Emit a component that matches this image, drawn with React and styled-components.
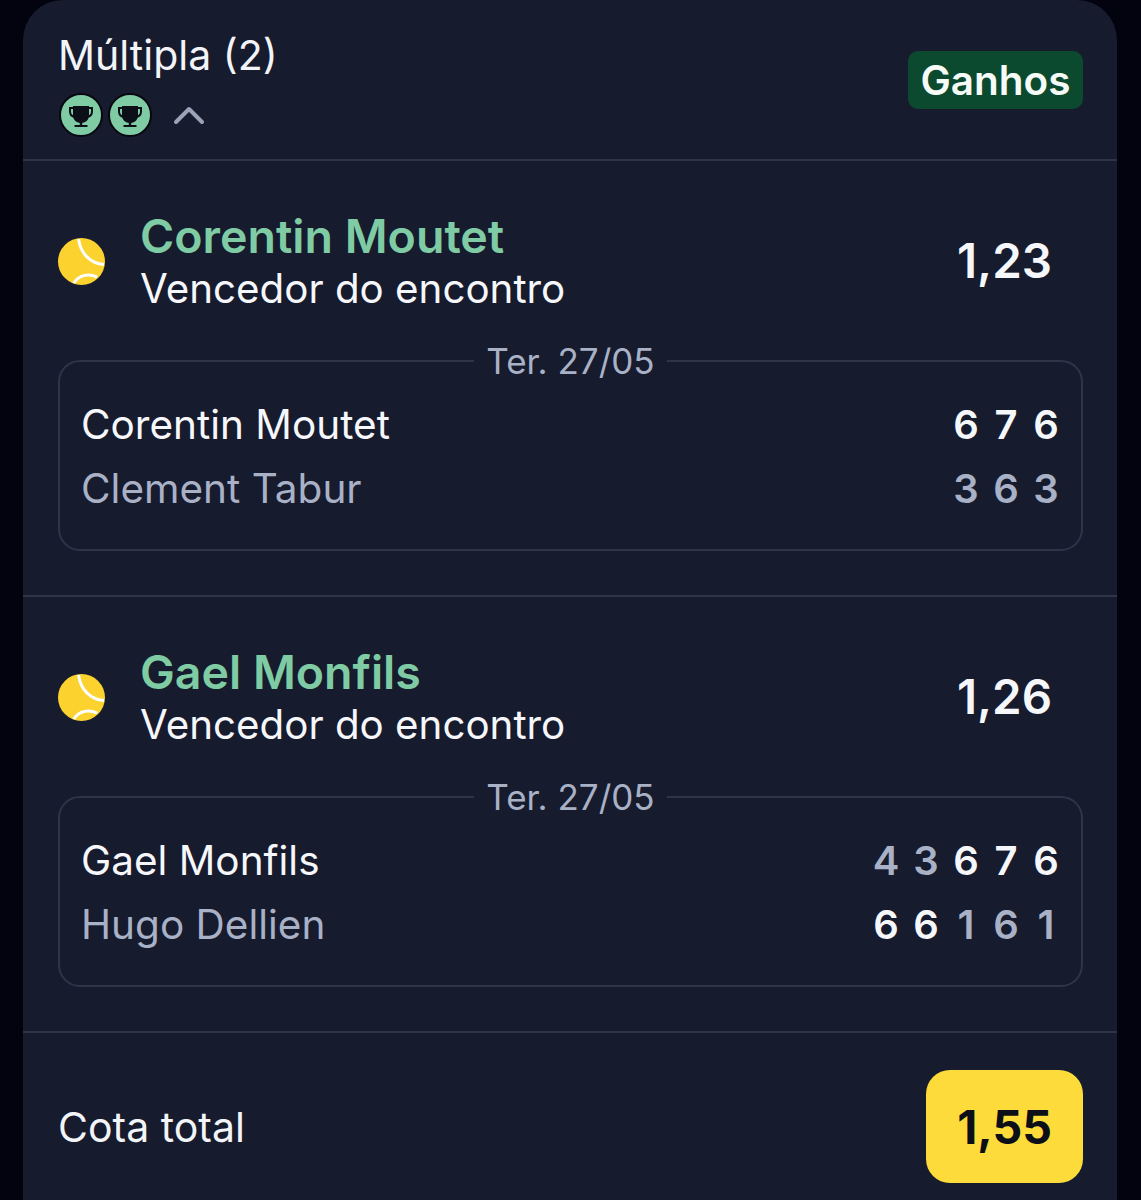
import React from "react";
import styled, { createGlobalStyle } from "styled-components";

const Global = createGlobalStyle`
  html, body { margin: 0; padding: 0; background: #03030f; }
  * { box-sizing: border-box; }
`;
const Page = styled.div`
  height: 1200px; overflow: hidden; padding: 0 24px 0 23px;
  background: #03030f;
  font-family: Inter, "Liberation Sans", sans-serif; color: #fff;
`;
const Card = styled.div`
  background: #161b2e; border-radius: 40px 40px 0 0; height: 1240px;
`;
const Header = styled.header`
  height: 161px; padding: 34px 34px 0 35px; border-bottom: 2px solid #2f3447;
  display: flex; justify-content: space-between; align-items: flex-start;
`;
const HeaderLeft = styled.div`display: flex; flex-direction: column;`;
const Title = styled.div`font-size: 41px; line-height: 42px; color: #f2f4f8;`;
const Legs = styled.div`display: flex; align-items: center; margin: 17px 0 0 1px; gap: 5px;`;
const Chevron = styled.svg`margin-left: 16px;`;
const Badge = styled.div`
  margin-top: 17px; height: 58px; width: 175px; border-radius: 10px; background: #0b4a2e;
  display: flex; align-items: center; justify-content: center;
  font-size: 40.500px; font-weight: 600; color: #f6fbf8;
`;
const Section = styled.section`
  height: 436px; padding: 47px 34px 0 35px; border-bottom: 2px solid #2f3447;
`;
const Selection = styled.div`display: flex; align-items: center; height: 108px;`;
const Ball = styled.svg`flex: none; margin: 0 35px 2px 0;`;
const SelectionText = styled.div`flex: 1;`;
const Pick = styled.div`font-size: 46.500px; line-height: 52px; font-weight: 600; color: #7fcba4;`;
const Market = styled.div`margin-top: 2px; font-size: 40.300px; line-height: 50px; color: #f6f7fa;`;
const Odds = styled.div`
  width: 157px; margin-bottom: 3px; text-align: center;
  font-size: 47.500px; font-weight: 600; color: #f6f7fa;
`;
const MatchBox = styled.fieldset`
  margin: 25px 0 0; padding: 0 15px; height: 210px;
  border: 2px solid #2f3447; border-radius: 22px;
`;
const DateLabel = styled.legend`
  margin: 0 auto; padding: 0 12px; font-size: 35px; line-height: 40px; color: #a9b1c6;
`;
const Row = styled.div`
  display: flex; justify-content: space-between; align-items: center; height: 64px;
  &:first-of-type { margin-top: 11px; }
`;
const Name = styled.div`
  margin-left: 6px; font-size: 40.500px; color: ${p => (p.$winner ? "#f6f7fa" : "#a9b1c6")};
`;
const Scores = styled.div`display: flex;`;
const Score = styled.span`
  width: 40px; text-align: center; font-size: 40px;
  font-weight: 600; color: ${p => (p.$won ? "#f6f7fa" : "#a9b1c6")};
`;
const Footer = styled.footer`
  display: flex; justify-content: space-between; align-items: center;
  padding: 37px 34px 0 35px;
`;
const TotalLabel = styled.div`font-size: 41px; color: #f2f4f8;`;
const Total = styled.div`
  width: 157px; height: 113px; border-radius: 24px; background: #fcdb3a;
  display: flex; align-items: center; justify-content: center;
  font-size: 46.500px; font-weight: 700; color: #0c0e18;
`;

const Trophy = () => (
  <svg width="44" height="44" viewBox="0 0 44 44">
    <circle cx="22" cy="22" r="21" fill="#7fcba4" stroke="#07080f" strokeWidth="2" />
    <path d="M14 13h16v9.500c0 4.500-3.500 7.500-8 7.500s-8-3-8-7.500z" fill="#0c0e18" />
    <path d="M14 15h-3v3.500c0 3 2 5 5 5.500M30 15h3v3.500c0 3-2 5-5 5.500" fill="none" stroke="#0c0e18" strokeWidth="2" />
    <path d="M22 29v3.500" stroke="#0c0e18" strokeWidth="2.500" />
    <path d="M15.500 33h13" stroke="#0c0e18" strokeWidth="2" />
  </svg>
);
const TennisBall = () => (
  <Ball width="47" height="47" viewBox="0 0 48 48">
    <circle cx="24" cy="24" r="24" fill="#fcd22f" />
    <path d="M21 1C23 16 33 26 47 27M16 46C22 37 32 36 40 40" fill="none" stroke="#fff" strokeWidth="3" />
  </Ball>
);

const bets = [
  { pick: "Corentin Moutet", odds: "1,23",
    a: { name: "Corentin Moutet", s: [[6, 1], [7, 1], [6, 1]] },
    b: { name: "Clement Tabur", s: [[3, 0], [6, 0], [3, 0]] } },
  { pick: "Gael Monfils", odds: "1,26",
    a: { name: "Gael Monfils", s: [[4, 0], [3, 0], [6, 1], [7, 1], [6, 1]] },
    b: { name: "Hugo Dellien", s: [[6, 1], [6, 1], [1, 0], [6, 0], [1, 0]] } },
];

const Player = ({ p, winner }) => (
  <Row>
    <Name $winner={winner}>{p.name}</Name>
    <Scores>{p.s.map(([v, w], i) => <Score key={i} $won={!!w}>{v}</Score>)}</Scores>
  </Row>
);

export default function App() {
  return (
    <Page>
      <Global />
      <Card>
        <Header>
          <HeaderLeft>
            <Title>Múltipla (2)</Title>
            <Legs>
              <Trophy /><Trophy />
              <Chevron width="32" height="20" viewBox="0 0 32 20">
                <path d="M3 17L16 4L29 17" fill="none" stroke="#9aa3b8" strokeWidth="4" strokeLinecap="round" strokeLinejoin="round" />
              </Chevron>
            </Legs>
          </HeaderLeft>
          <Badge>Ganhos</Badge>
        </Header>
        {bets.map(b => (
          <Section key={b.pick}>
            <Selection>
              <TennisBall />
              <SelectionText>
                <Pick>{b.pick}</Pick>
                <Market>Vencedor do encontro</Market>
              </SelectionText>
              <Odds>{b.odds}</Odds>
            </Selection>
            <MatchBox>
              <DateLabel>Ter. 27/05</DateLabel>
              <Player p={b.a} winner />
              <Player p={b.b} />
            </MatchBox>
          </Section>
        ))}
        <Footer>
          <TotalLabel>Cota total</TotalLabel>
          <Total>1,55</Total>
        </Footer>
      </Card>
    </Page>
  );
}
